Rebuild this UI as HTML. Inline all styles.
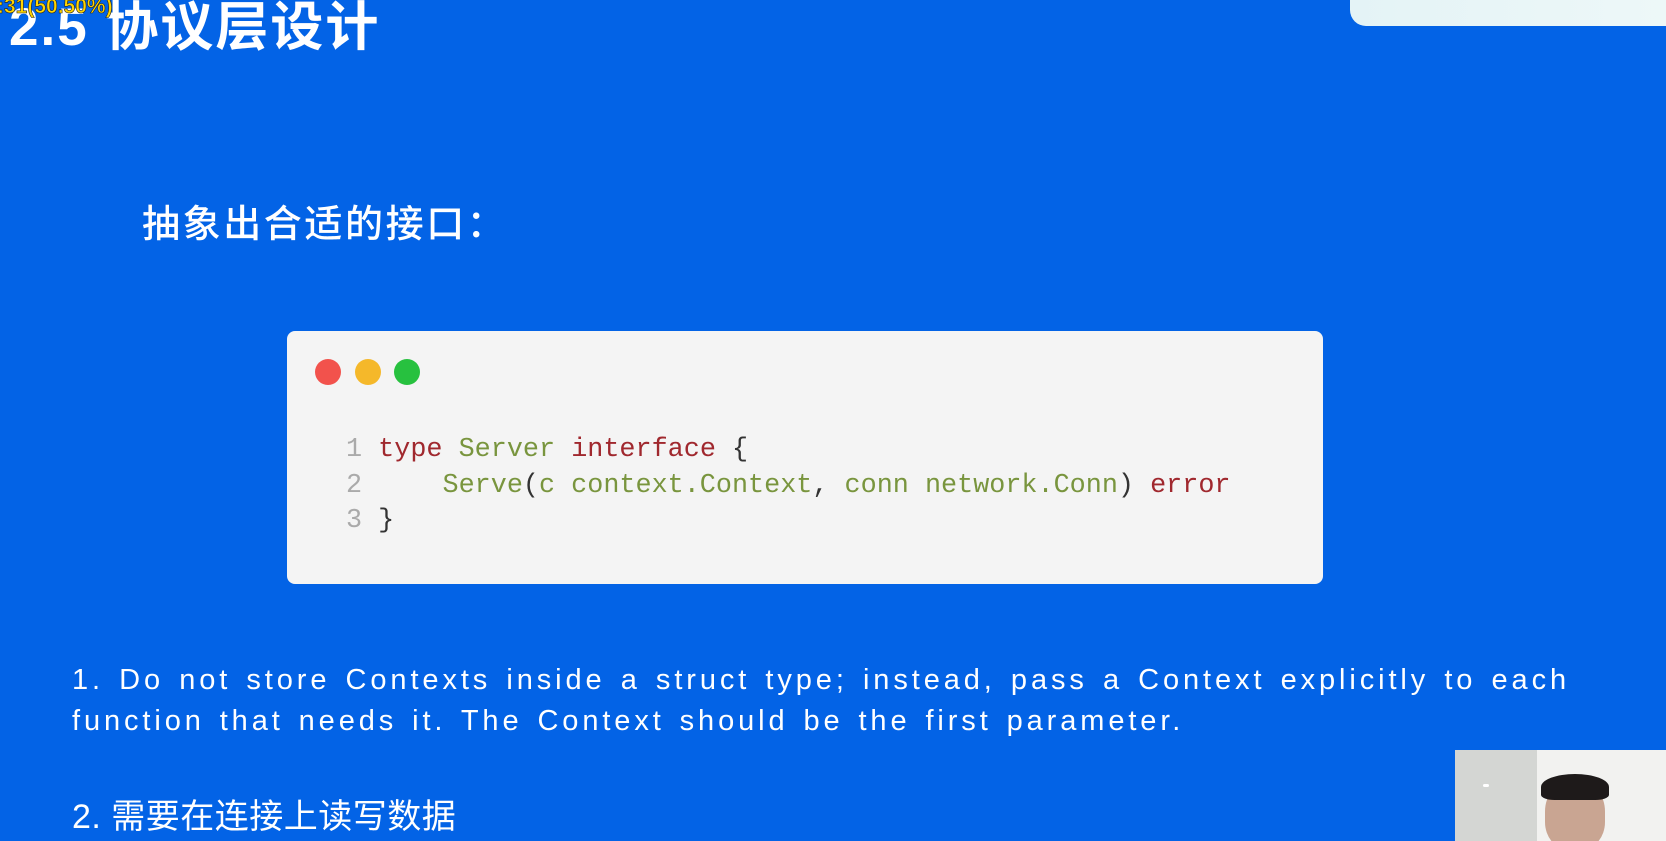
<!DOCTYPE html>
<html><head><meta charset="utf-8">
<style>
html,body{margin:0;padding:0;}
body{width:1666px;height:841px;overflow:hidden;background:#0363e6;position:relative;font-family:"Liberation Sans","Noto Sans CJK SC",sans-serif;color:#fff;}
.abs{position:absolute;}
#tag{left:-3px;top:-4px;font-size:21px;line-height:21px;color:#ffd400;font-weight:bold;-webkit-text-stroke:0.6px #222;}
#title{left:9px;top:-3px;font-size:53px;font-weight:bold;line-height:62px;letter-spacing:2px;}
#topbox{left:1350px;top:-20px;width:340px;height:46px;border-radius:16px;background:linear-gradient(90deg,#e4f3f6,#eef8f8);}
#sub{left:142px;top:201px;font-size:38px;line-height:48px;letter-spacing:2.6px;font-weight:500;}
#card{left:287px;top:331px;width:1036px;height:253px;background:#f4f4f4;border-radius:8px;}
.dot{position:absolute;top:359px;width:26px;height:26px;border-radius:50%;}
#code{left:346px;top:433px;font-family:"Liberation Mono",monospace;font-size:26.8px;line-height:35.5px;white-space:pre;color:#333;}
.n{color:#aaa;}
.k{color:#a0282e;}
.g{color:#79953e;}
.p{left:72px;font-size:29px;line-height:41px;white-space:nowrap;letter-spacing:3.9px;}
#p1a{top:660px;width:1498px;text-align:justify;text-align-last:justify;}
#p1b{top:701px;word-spacing:3px;}
#p2{left:72px;top:795px;font-size:34px;line-height:44px;letter-spacing:0.5px;}
#cam{left:1455px;top:750px;width:211px;height:91px;background:#f2f2f0;overflow:hidden;}
</style></head><body>
<div id="topbox" class="abs"></div>
<div id="title" class="abs">2.5 协议层设计</div>
<div id="tag" class="abs">:31(50.50%)</div>
<div id="sub" class="abs">抽象出合适的接口：</div>
<div id="card" class="abs"></div>
<div class="dot" style="left:315px;background:#f2524c"></div>
<div class="dot" style="left:355px;background:#f5b82a"></div>
<div class="dot" style="left:394px;background:#27c13f"></div>
<div id="code" class="abs"><span class="n">1 </span><span class="k">type</span> <span class="g">Server</span> <span class="k">interface</span> {
<span class="n">2 </span>    <span class="g">Serve</span>(<span class="g">c context.Context</span>, <span class="g">conn network.Conn</span>) <span class="k">error</span>
<span class="n">3 </span>}</div>
<div id="p1a" class="abs p">1. Do not store Contexts inside a struct type; instead, pass a Context explicitly to each</div>
<div id="p1b" class="abs p">function that needs it. The Context should be the first parameter.</div>
<div id="p2" class="abs">2. 需要在连接上读写数据</div>
<div id="cam" class="abs">
  <div class="abs" style="left:0;top:0;width:82px;height:91px;background:#d4d6d3"></div>
  <div class="abs" style="left:28px;top:34px;width:6px;height:3px;background:#fff;border-radius:3px"></div>
  <div class="abs" style="left:90px;top:30px;width:60px;height:70px;border-radius:45% 45% 40% 40%;background:#c9a592"></div>
  <div class="abs" style="left:86px;top:24px;width:68px;height:26px;border-radius:50% 50% 20% 20%;background:#1e1a1a"></div>
</div>
</body></html>
